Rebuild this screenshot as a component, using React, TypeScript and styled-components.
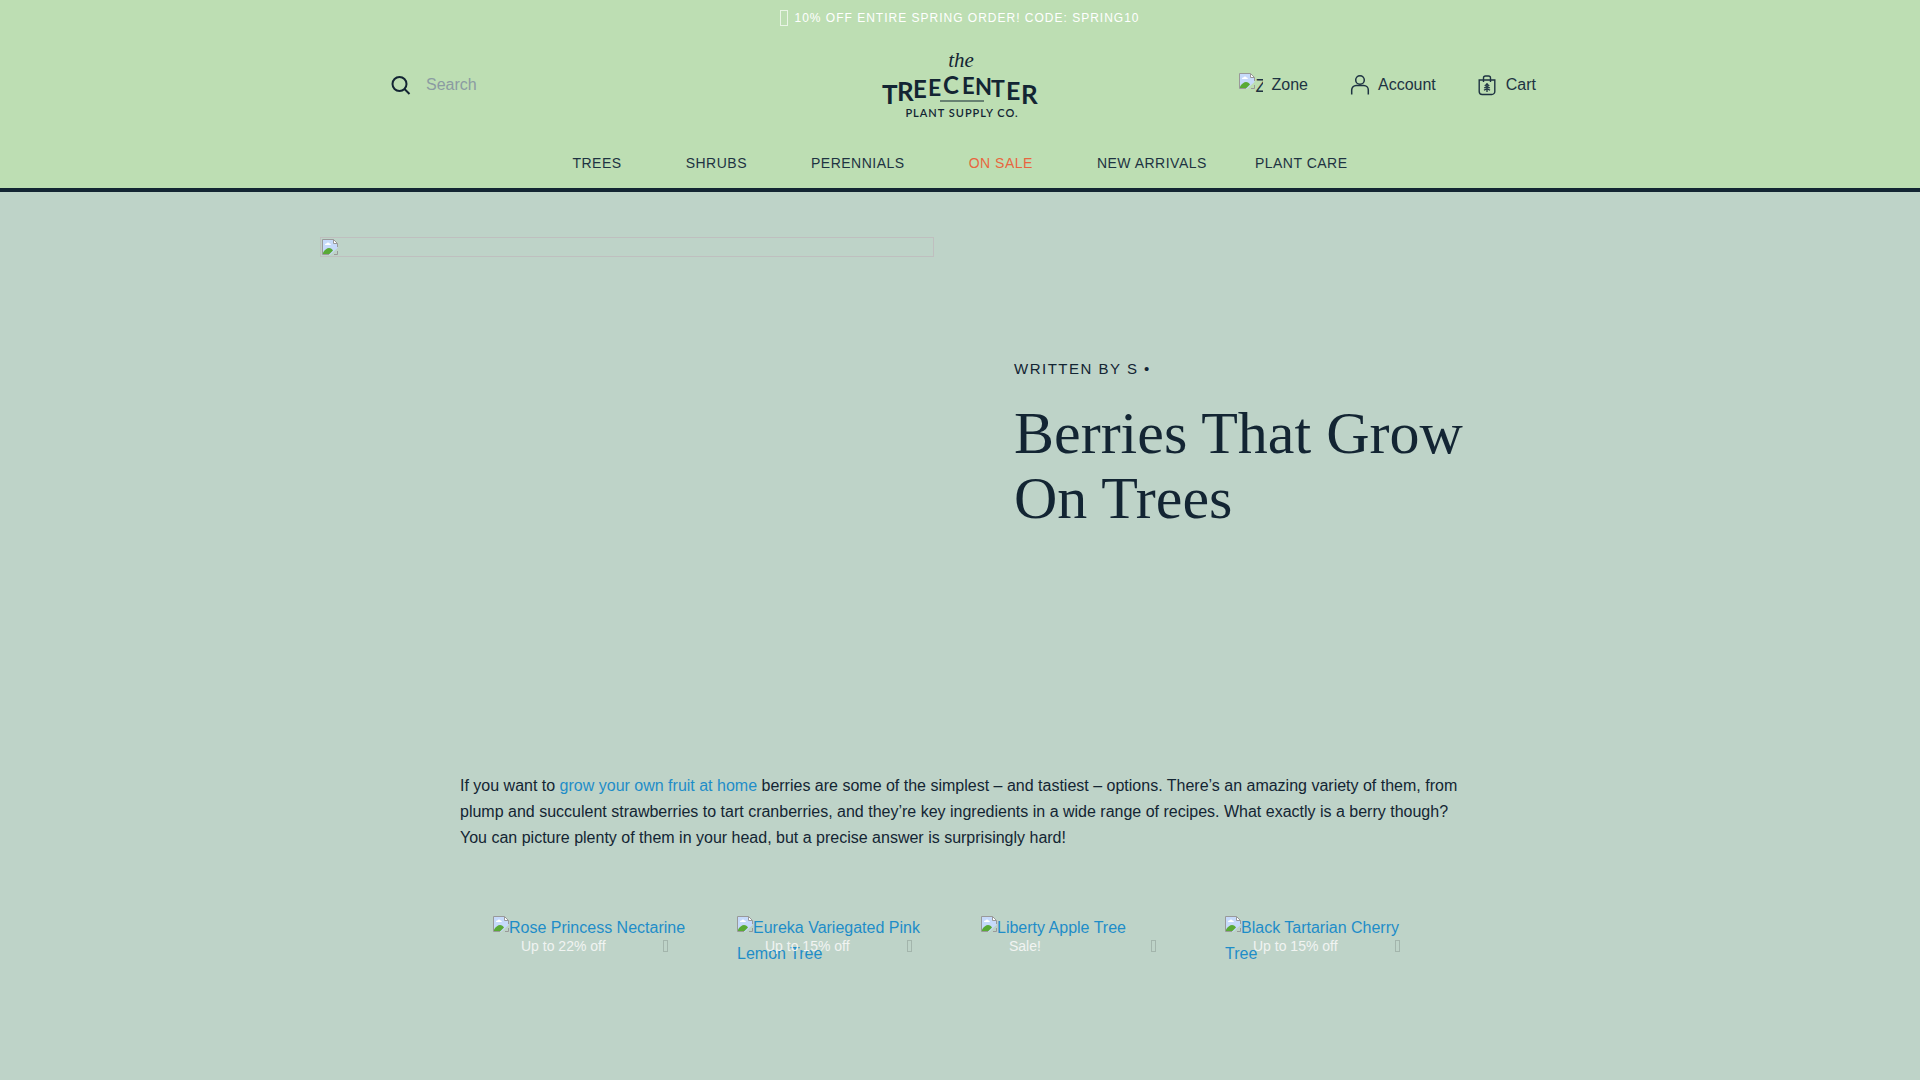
import React from "react";
import styled, { createGlobalStyle } from "styled-components";

const ink = "#132533";
const sans = '"Liberation Sans", Arial, sans-serif';
const serif = '"Liberation Serif", "Times New Roman", serif';

const GlobalStyle = createGlobalStyle`
  *, *::before, *::after { box-sizing: border-box; }
  body {
    margin: 0;
    background: #bed3c8;
    color: ${ink};
    font: 16px/26px ${sans};
  }
  a { color: inherit; text-decoration: none; }
`;

const Header = styled.header`
  background: #bddeb3;
  border-bottom: 4px solid ${ink};
`;

const Announcement = styled.p`
  display: flex;
  align-items: center;
  justify-content: center;
  gap: 6px;
  margin: 0;
  height: 36px;
  color: #fff;
  font-size: 12px;
  letter-spacing: 1px;
`;

const Tofu = styled.span<{ $large?: boolean }>`
  flex: none;
  width: ${(p) => (p.$large ? 8 : 5)}px;
  height: ${(p) => (p.$large ? 16 : 12)}px;
  border: 1px solid ${(p) => (p.$large ? "#e9f5e6" : "#a3b5ac")};
`;

const TopRow = styled.div`
  display: grid;
  grid-template-columns: 1fr auto 1fr;
  align-items: center;
  max-width: 1280px;
  height: 98px;
  margin: 0 auto;
  padding: 0 64px;
`;

const SearchForm = styled.form`
  display: flex;
  align-items: center;
  gap: 14px;
  padding-left: 6px;
`;

const IconButton = styled.button`
  display: flex;
  padding: 0;
  border: 0;
  background: none;
  color: ${ink};
  cursor: pointer;
`;

const SearchInput = styled.input`
  width: 240px;
  padding: 0;
  border: 0;
  outline: 0;
  background: none;
  color: ${ink};
  font: 16px/26px ${sans};
  &::placeholder { color: #8b9ba2; opacity: 1; }
`;

const LogoLink = styled.a`
  display: flex;
  svg { display: block; }
`;

const Actions = styled.div`
  display: flex;
  justify-content: flex-end;
  gap: 40px;
  color: #1e3342;
`;

const Action = styled.a`
  display: flex;
  align-items: center;
  gap: 8px;
  svg { flex: none; }
`;

const ZoneImage = styled.span`
  display: flex;
  width: 24px;
  height: 24px;
  overflow: hidden;
  font-size: 18px;
  line-height: 26px;
`;

const Nav = styled.nav`
  display: flex;
  justify-content: center;
  gap: 48px;
  height: 54px;
  padding-top: 16px;
  font-size: 14px;
  line-height: 26px;
  letter-spacing: 0.5px;
  text-transform: uppercase;
`;

const NavLink = styled.a<{ $menu?: boolean; $sale?: boolean }>`
  padding-right: ${(p) => (p.$menu ? 16 : 0)}px;
  color: ${(p) => (p.$sale ? "#e8663f" : "#1e3342")};
`;

const Hero = styled.section`
  display: grid;
  grid-template-columns: 614px 1fr;
  gap: 80px;
  max-width: 1280px;
  min-height: 516px;
  margin: 0 auto;
  padding-top: 45px;
`;

const HeroImage = styled.div`
  display: flex;
  height: 20px;
  padding: 1px;
  border: 1px solid #bfbfbf;
`;

const HeroText = styled.div`
  padding-top: 119px;
`;

const Byline = styled.p`
  margin: 0 0 19px;
  font-size: 15px;
  letter-spacing: 1.5px;
  text-transform: uppercase;
`;

const Title = styled.h1`
  margin: 0;
  max-width: 480px;
  font: 400 60px/65px ${serif};
`;

const Article = styled.article`
  max-width: 1000px;
  margin: 65px auto 0;
  p { margin: 0; }
`;

const TextLink = styled.a`
  color: #1e8dc8;
`;

const Products = styled.ul`
  display: grid;
  grid-template-columns: repeat(4, 1fr);
  gap: 44px;
  margin: 64px 0 0;
  padding: 0 35px 100px 33px;
  list-style: none;
`;

const Product = styled.li`
  position: relative;
  svg { vertical-align: 1px; }
`;

const Badge = styled.span`
  position: absolute;
  top: 18px;
  left: 28px;
  display: flex;
  justify-content: space-between;
  align-items: center;
  width: 147px;
  color: #f1f4f2;
  font-size: 14px;
`;

const BrokenImage = () => (
  <svg width="16" height="16" viewBox="0 0 16 16" aria-hidden="true">
    <path d="M.5.5h11l4 4V9l-7 6.500h-8z" fill="#c6dafa" />
    <path d="M1 15v-1.500c2-3 4-4.500 6-4.500 2 0 3 1 4 2.500L7.500 15z" fill="#59aa36" />
    <path d="M3 6c0-1 .5-1.500 1.500-1.500C5 3 7 3 7.500 4.500 9 4.500 9 6 8.500 6z" fill="#fff" />
    <path d="M11.500.5v4h4" fill="#fff" stroke="#999" />
    <path d="M15.500 8V4.500l-4-4H.5v15H7M12 15.500h3.500V12" fill="none" stroke="#999" />
  </svg>
);

const SearchIcon = () => (
  <svg width="22" height="22" viewBox="0 0 22 22" fill="none" stroke="currentColor" strokeWidth="2" aria-hidden="true">
    <circle cx="9.500" cy="10" r="7" />
    <path d="M14.500 15l5 5" />
  </svg>
);

const AccountIcon = () => (
  <svg width="22" height="22" viewBox="0 0 22 22" fill="none" stroke="currentColor" strokeWidth="1.500" aria-hidden="true">
    <circle cx="12" cy="6" r="4.300" />
    <path d="M3.700 20.500v-4.500a4.500 4.500 0 0 1 4.500-4.500h7.600a4.500 4.500 0 0 1 4.500 4.500v4.500" />
  </svg>
);

const CartIcon = () => (
  <svg width="22" height="22" viewBox="0 0 22 22" fill="none" stroke="currentColor" strokeWidth="1.400" aria-hidden="true">
    <path d="M3.200 6h15.600v11.500a3 3 0 0 1-3 3H6.200a3 3 0 0 1-3-3zM7.500 8V4a2 2 0 0 1 2-2h3a2 2 0 0 1 2 2v4" />
    <path d="M11 9v9M8.700 11.800l2.300-1.500 2.300 1.500M8.200 14l2.800-1.600 2.800 1.600M8 16.300l3-1.700 3 1.700" strokeWidth="1.300" />
  </svg>
);

const arch = [
  { c: "T", x: 2, y: 57, s: 26 },
  { c: "R", x: 17, y: 54, s: 26 },
  { c: "E", x: 33, y: 51, s: 24 },
  { c: "E", x: 48, y: 49, s: 23 },
  { c: "C", x: 63, y: 47, s: 24 },
  { c: "E", x: 82, y: 47, s: 22 },
  { c: "N", x: 95, y: 48, s: 22 },
  { c: "T", x: 111, y: 50, s: 23 },
  { c: "E", x: 126, y: 53, s: 25 },
  { c: "R", x: 141, y: 57, s: 26 },
];

const Logo = () => (
  <svg width="160" height="76" viewBox="0 0 160 76" fill={ink} role="img" aria-label="The Tree Center Plant Supply Co.">
    <text x="81" y="20" textAnchor="middle" fontFamily="Liberation Serif, serif" fontStyle="italic" fontSize="21">the</text>
    <text fontFamily="Lato, sans-serif" fontWeight="700">
      {arch.map((l, i) => (
        <tspan key={i} x={l.x} y={l.y} fontSize={l.s}>{l.c}</tspan>
      ))}
    </text>
    <path d="M60 54h44" stroke={ink} strokeWidth="1.200" />
    <text x="82" y="70" textAnchor="middle" fontFamily="Lato, sans-serif" fontWeight="600" fontSize="11" letterSpacing="1">PLANT SUPPLY CO.</text>
  </svg>
);

const navItems = [
  { label: "Trees", menu: true },
  { label: "Shrubs", menu: true },
  { label: "Perennials", menu: true },
  { label: "On Sale", menu: true, sale: true },
  { label: "New Arrivals" },
  { label: "Plant Care" },
];

const products = [
  { name: "Rose Princess Nectarine", badge: "Up to 22% off" },
  { name: "Eureka Variegated Pink Lemon Tree", badge: "Up to 15% off" },
  { name: "Liberty Apple Tree", badge: "Sale!" },
  { name: "Black Tartarian Cherry Tree", badge: "Up to 15% off" },
];

export default function App() {
  return (
    <>
      <GlobalStyle />
      <Header>
        <Announcement>
          <Tofu $large aria-hidden="true" />
          10% OFF ENTIRE SPRING ORDER! CODE: SPRING10
        </Announcement>
        <TopRow>
          <SearchForm role="search">
            <IconButton type="submit" aria-label="Submit search">
              <SearchIcon />
            </IconButton>
            <SearchInput type="search" placeholder="Search" aria-label="Search" />
          </SearchForm>
          <LogoLink href="#">
            <Logo />
          </LogoLink>
          <Actions>
            <Action href="#zone">
              <ZoneImage aria-hidden="true"><BrokenImage />Z</ZoneImage>
              Zone
            </Action>
            <Action href="#account"><AccountIcon />Account</Action>
            <Action href="#cart"><CartIcon />Cart</Action>
          </Actions>
        </TopRow>
        <Nav aria-label="Main">
          {navItems.map((n) => (
            <NavLink key={n.label} href="#" $menu={n.menu} $sale={n.sale}>{n.label}</NavLink>
          ))}
        </Nav>
      </Header>
      <main>
        <Hero>
          <HeroImage><BrokenImage /></HeroImage>
          <HeroText>
            <Byline>Written by S •</Byline>
            <Title>Berries That Grow On Trees</Title>
          </HeroText>
        </Hero>
        <Article>
          <p>
            If you want to <TextLink href="#">grow your own fruit at home</TextLink> berries are some of the simplest – and
            tastiest – options. There’s an amazing variety of them, from plump and succulent strawberries to tart
            cranberries, and they’re key ingredients in a wide range of recipes. What exactly is a berry though? You can
            picture plenty of them in your head, but a precise answer is surprisingly hard!
          </p>
          <Products>
            {products.map((p) => (
              <Product key={p.name}>
                <TextLink href="#"><BrokenImage />{p.name}</TextLink>
                <Badge>{p.badge}<Tofu aria-hidden="true" /></Badge>
              </Product>
            ))}
          </Products>
        </Article>
      </main>
    </>
  );
}
